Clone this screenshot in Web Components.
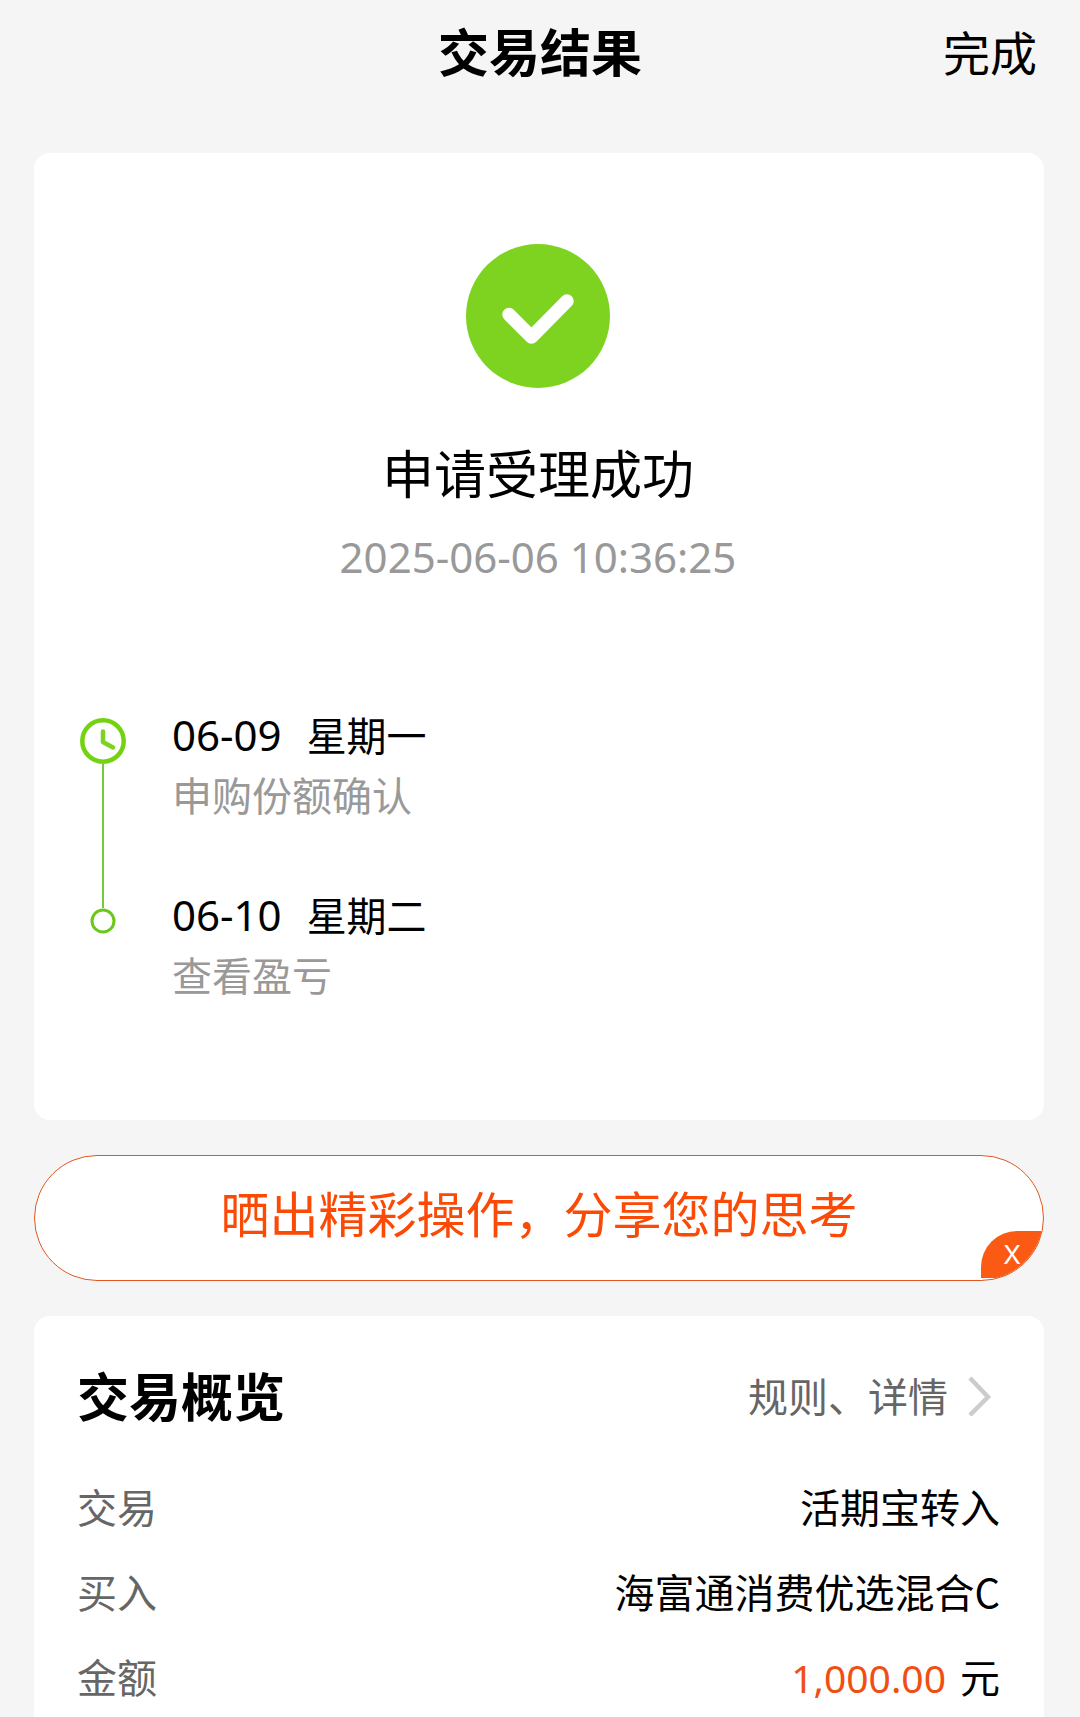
<!DOCTYPE html>
<html lang="zh-CN">
<head>
<meta charset="UTF-8">
<meta name="viewport" content="width=device-width, initial-scale=1.0">
<title>交易结果</title>
<style>
    body {
        margin: 0;
        min-height: 100vh;
        display: flex;
        flex-direction: column;
        background: #f5f5f5;
        color: #000;
        font-family: "Noto Sans", "Noto Sans CJK SC", sans-serif;
        font-size: 40px;
        line-height: 60px;
    }
    main {
        flex: 1;
        display: flex;
        flex-direction: column;
        gap: 35px;
        padding: 0 36px 0 34px;
    }
    overview-card {
        flex: 1;
    }
</style>
</head>
<body>
    <result-header>
        交易结果
        <span slot="action">完成</span>
    </result-header>

    <main>
        <result-card>
            <result-status time="2025-06-06 10:36:25">申请受理成功</result-status>
            <time-line>
                <time-step date="06-09" day="星期一" current>申购份额确认</time-step>
                <time-step date="06-10" day="星期二">查看盈亏</time-step>
            </time-line>
        </result-card>

        <share-banner>晒出精彩操作，分享您的思考</share-banner>

        <overview-card>
            <span slot="title">交易概览</span>
            <span slot="link">规则、详情</span>
            <info-row label="交易">活期宝转入</info-row>
            <info-row label="买入">海富通消费优选混合C</info-row>
            <info-row label="金额"><money-value unit="元">1,000.00</money-value></info-row>
        </overview-card>
    </main>

<script>
// 顶部标题栏
class ResultHeader extends HTMLElement {
    constructor() {
        super();
        this.attachShadow({ mode: 'open' });
    }

    connectedCallback() {
        this.shadowRoot.innerHTML = `
        <style>
            :host {
                display: block;
                margin-bottom: 51px;
            }
            header {
                display: grid;
                grid-template-columns: 1fr auto 1fr;
                align-items: center;
                height: 102px;
                padding: 0 43px;
            }
            h1 {
                grid-column: 2;
                margin: 0;
                padding-bottom: 2px;
                font: bold 51px/60px "Noto Sans CJK SC", sans-serif;
            }
            button {
                justify-self: end;
                padding: 0;
                border: none;
                background: none;
                color: inherit;
                font: 47px/60px "Noto Sans CJK SC", sans-serif;
                cursor: pointer;
            }
        </style>
        <header>
            <h1><slot></slot></h1>
            <button type="button"><slot name="action"></slot></button>
        </header>
        `;
    }
}
customElements.define('result-header', ResultHeader);

// 结果卡片
class ResultCard extends HTMLElement {
    constructor() {
        super();
        this.attachShadow({ mode: 'open' });
    }

    connectedCallback() {
        this.shadowRoot.innerHTML = `
        <style>
            :host {
                display: flex;
                flex-direction: column;
                gap: 117px;
                padding: 91px 44px 116px;
                border-radius: 16px;
                background: #fff;
            }
        </style>
        <slot></slot>
        `;
    }
}
customElements.define('result-card', ResultCard);

// 成功图标 + 文案 + 时间
class ResultStatus extends HTMLElement {
    constructor() {
        super();
        this.attachShadow({ mode: 'open' });
    }

    connectedCallback() {
        this.shadowRoot.innerHTML = `
        <style>
            :host {
                display: flex;
                flex-direction: column;
                align-items: center;
                padding-right: 2px;
            }
            svg {
                width: 144px;
                height: 144px;
                margin-bottom: 52px;
            }
            h2 {
                margin: 0 0 23px;
                font: 52px/64px "Noto Sans CJK SC", sans-serif;
            }
            time {
                color: #999;
                font-size: 42px;
                line-height: 60px;
            }
        </style>
        <svg viewBox="0 0 144 144" aria-hidden="true">
            <circle cx="72" cy="72" r="72" fill="#7ed321"/>
            <path d="M43 70.5 65.5 93 101 57" fill="none" stroke="#fff" stroke-width="13.5" stroke-linecap="round" stroke-linejoin="round"/>
        </svg>
        <h2><slot></slot></h2>
        <time>${this.getAttribute('time')}</time>
        `;
    }
}
customElements.define('result-status', ResultStatus);

// 时间轴
class TimeLine extends HTMLElement {
    constructor() {
        super();
        this.attachShadow({ mode: 'open' });
    }

    connectedCallback() {
        this.shadowRoot.innerHTML = `
        <style>
            :host {
                display: block;
            }
        </style>
        <slot></slot>
        `;
    }
}
customElements.define('time-line', TimeLine);

class TimeStep extends HTMLElement {
    constructor() {
        super();
        this.attachShadow({ mode: 'open' });
    }

    connectedCallback() {
        const clock = `
            <svg width="46" height="46" viewBox="0 0 46 46" aria-hidden="true">
                <circle cx="23" cy="23" r="20.7" fill="none" stroke="#73d313" stroke-width="4.5"/>
                <path d="M23 13.5V24L33 29.5" fill="none" stroke="#7ed321" stroke-width="4.5" stroke-linecap="round" stroke-linejoin="round"/>
            </svg>`;
        const dot = `
            <svg width="26" height="26" viewBox="0 0 26 26" aria-hidden="true">
                <circle cx="13" cy="13" r="11" fill="none" stroke="#6cc71b" stroke-width="3"/>
            </svg>`;

        this.shadowRoot.innerHTML = `
        <style>
            :host {
                display: flex;
                gap: 44px;
            }
            .rail {
                display: flex;
                flex-direction: column;
                align-items: center;
                width: 50px;
                padding-top: 24px;
            }
            :host([current]) .rail {
                padding-top: 14px;
            }
            svg {
                display: block;
                flex: none;
            }
            /* 连接线 */
            :host([current]) .rail::after {
                content: "";
                flex: 1;
                width: 2px;
                margin-bottom: -24px;
                background: #76c83c;
            }
            :host([current]) .text {
                padding-bottom: 60px;
            }
            p {
                margin: 0;
            }
            .head {
                display: flex;
                align-items: baseline;
                gap: 25px;
                height: 60px;
            }
            time {
                font-size: 42px;
            }
            .day, .desc {
                font-family: "Noto Sans CJK SC", sans-serif;
            }
            .desc {
                color: #999;
            }
        </style>
        <div class="rail">${this.hasAttribute('current') ? clock : dot}</div>
        <div class="text">
            <p class="head"><time>${this.getAttribute('date')}</time><span class="day">${this.getAttribute('day')}</span></p>
            <p class="desc"><slot></slot></p>
        </div>
        `;
    }
}
customElements.define('time-step', TimeStep);

// 分享横幅，可关闭
class ShareBanner extends HTMLElement {
    constructor() {
        super();
        this.attachShadow({ mode: 'open' });
    }

    connectedCallback() {
        this.shadowRoot.innerHTML = `
        <style>
            :host {
                display: block;
                position: relative;
                overflow: hidden;
                border: 1px solid #e0581f;
                border-radius: 63px;
                background: #fff;
            }
            :host([hidden]) {
                display: none;
            }
            button {
                border: none;
                cursor: pointer;
            }
            .share {
                display: block;
                width: 100%;
                padding: 24px 0 36px;
                background: none;
                color: #fb4a06;
                font: 49px/64px "Noto Sans CJK SC", sans-serif;
            }
            /* 右下角关闭角标 */
            .close {
                position: absolute;
                right: 0;
                bottom: 2px;
                width: 62px;
                height: 47px;
                padding: 0;
                border-radius: 36px 0 0 0;
                background: #fb5a14;
                color: #fff;
                font: 26px/47px Inter, sans-serif;
            }
        </style>
        <button class="share" type="button"><slot></slot></button>
        <button class="close" id="closeBtn" type="button">X</button>
        `;

        this.shadowRoot.getElementById('closeBtn').addEventListener('click', () => {
            this.hidden = true;
        });
    }
}
customElements.define('share-banner', ShareBanner);

// 交易概览
class OverviewCard extends HTMLElement {
    constructor() {
        super();
        this.attachShadow({ mode: 'open' });
    }

    connectedCallback() {
        this.shadowRoot.innerHTML = `
        <style>
            :host {
                display: block;
                padding: 49px 44px 0 43px;
                border-radius: 16px 16px 0 0;
                background: #fff;
                font-family: "Noto Sans CJK SC", sans-serif;
            }
            .head {
                display: flex;
                justify-content: space-between;
                align-items: center;
                margin-bottom: 51px;
            }
            h2 {
                margin: 0;
                font-size: 52px;
                line-height: 60px;
            }
            a {
                display: flex;
                align-items: center;
                gap: 20px;
                padding-right: 8px;
                color: #666;
                text-decoration: none;
            }
            .rows {
                display: flex;
                flex-direction: column;
                gap: 25px;
            }
        </style>
        <div class="head">
            <h2><slot name="title"></slot></h2>
            <a href="#">
                <slot name="link"></slot>
                <svg width="24" height="42" viewBox="0 0 24 42" aria-hidden="true">
                    <path d="M2 4 20 23 2 41" fill="none" stroke="#ccc" stroke-width="4.5"/>
                </svg>
            </a>
        </div>
        <div class="rows"><slot></slot></div>
        `;
    }
}
customElements.define('overview-card', OverviewCard);

class InfoRow extends HTMLElement {
    constructor() {
        super();
        this.attachShadow({ mode: 'open' });
    }

    connectedCallback() {
        this.shadowRoot.innerHTML = `
        <style>
            :host {
                display: flex;
                justify-content: space-between;
            }
            .label {
                color: #666;
            }
        </style>
        <span class="label">${this.getAttribute('label')}</span>
        <slot></slot>
        `;
    }
}
customElements.define('info-row', InfoRow);

class MoneyValue extends HTMLElement {
    constructor() {
        super();
        this.attachShadow({ mode: 'open' });
    }

    connectedCallback() {
        this.shadowRoot.innerHTML = `
        <style>
            :host {
                display: flex;
                align-items: baseline;
                gap: 14px;
            }
            .num {
                color: #f04e12;
                font-family: "Noto Sans", sans-serif;
                font-size: 39px;
            }
        </style>
        <span class="num"><slot></slot></span><span>${this.getAttribute('unit')}</span>
        `;
    }
}
customElements.define('money-value', MoneyValue);
</script>
</body>
</html>
